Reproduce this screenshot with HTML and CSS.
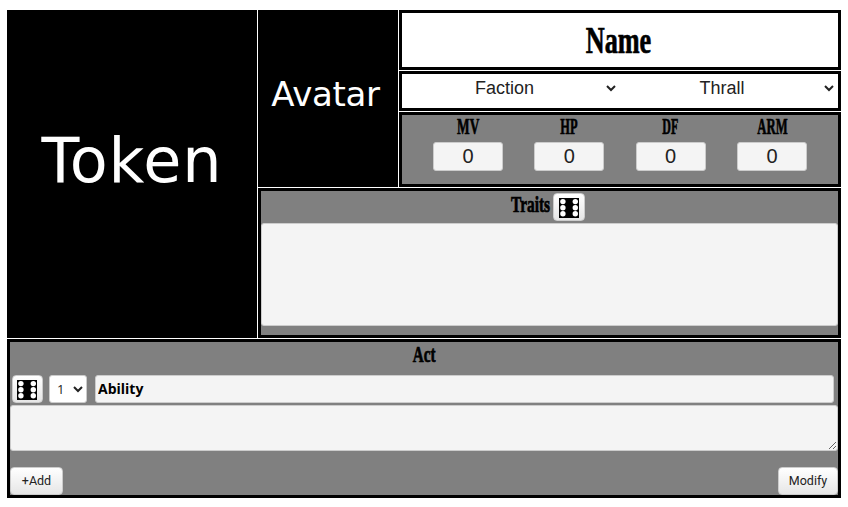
FILE: index.html
```
<!DOCTYPE html>
<html lang="en">
<head>
<meta charset="utf-8">
<title>Character sheet</title>
<link rel="stylesheet" href="styles.css">
</head>
<body>
<svg class="defs" aria-hidden="true"><symbol id="die" viewBox="0 0 20 20"><rect width="20" height="20"/><g fill="#fff"><circle cx="3.9" cy="3.6" r="2.7"/><circle cx="3.9" cy="9.7" r="2.7"/><circle cx="3.9" cy="15.8" r="2.7"/><circle cx="16.3" cy="3.6" r="2.7"/><circle cx="16.3" cy="9.7" r="2.7"/><circle cx="16.3" cy="15.8" r="2.7"/></g></symbol></svg>
<main class="sheet">
  <div class="token"><span>Token</span></div>
  <div class="avatar"><span>Avatar</span></div>
  <div class="panel name"><span class="gothic gothic-name">Name</span></div>
  <div class="panel types">
    <select><option>Faction</option></select>
    <select><option>Thrall</option></select>
  </div>
  <div class="panel stats">
    <label class="stat"><span class="gothic mv">MV</span><input class="field" value="0"></label>
    <label class="stat"><span class="gothic hp">HP</span><input class="field" value="0"></label>
    <label class="stat"><span class="gothic df">DF</span><input class="field" value="0"></label>
    <label class="stat"><span class="gothic arm">ARM</span><input class="field" value="0"></label>
  </div>
  <section class="panel traits">
    <div class="traits-head"><span class="gothic traits-title">Traits</span><button class="btn die"><svg><use href="#die"/></svg></button></div>
    <div class="field traits-box"></div>
  </section>
  <section class="panel act">
    <div class="act-head"><span class="gothic act-title">Act</span></div>
    <div class="ability">
      <button class="btn die"><svg><use href="#die"/></svg></button>
      <select class="count"><option>1</option></select>
      <input class="field ability-name" value="Ability">
    </div>
    <textarea class="field note"></textarea>
    <div class="actions"><button class="btn">+Add</button><button class="btn modify">Modify</button></div>
  </section>
</main>
</body>
</html>
```
FILE: styles.css
```
* { box-sizing: border-box; }
body { margin: 0; padding: 10px 7px 0; background: #fff; font-family: "Liberation Sans", Arial, sans-serif; overflow: hidden; }
.defs { display: none; }
.sheet {
  display: grid;
  grid-template-columns: 250px 140px 442px;
  grid-template-rows: 60px 40px 75px 150px 159px;
  gap: 1px;
}
.token, .avatar { background: #000; color: #fff; font-family: "DejaVu Sans", Verdana, sans-serif; display: flex; align-items: center; justify-content: center; }
.token { grid-row: 1 / 5; font-size: 62px; letter-spacing: .9px; padding-bottom: 28px; }
.avatar { grid-row: 1 / 4; font-size: 34px; letter-spacing: -.3px; padding: 0 5px 10px 0; }
.panel { border: 3px solid #000; background: #808080; min-width: 0; }
.gothic { display: inline-block; flex: none; font: bold 23px/24px "Liberation Serif", serif; color: #000; -webkit-text-stroke: .7px #000; }
.name { background: #fff; display: flex; justify-content: center; align-items: center; padding-right: 3px; }
.gothic-name { font-size: 38px; line-height: 40px; transform: scaleX(.69); }
select { font-family: inherit; color: #222; background: #fff; border: 0; }
.types { background: #fff; display: grid; grid-template-columns: 217px 218px; align-items: start; }
.types select { height: 28px; font-size: 18px; text-align: center; text-align-last: center; padding: 0; }
.stats { display: flex; justify-content: space-between; padding: 0 31px; }
.stat { width: 70px; display: flex; flex-direction: column; align-items: center; }
.stat .gothic { height: 27px; }
.mv { transform: scaleX(.58); }
.hp { transform: scaleX(.54); }
.df { transform: scaleX(.52); }
.arm { transform: scaleX(.55); }
.field { display: block; background: #f4f4f4; border: 1px solid #ccc; border-radius: 3px; color: #222; outline: 0; margin: 0; }
.stat .field { width: 70px; height: 29px; text-align: center; font: 20px "Liberation Sans", sans-serif; padding: 0; }
.traits { grid-column: 2 / 4; }
.traits-head { height: 32px; display: flex; justify-content: center; padding: 2px 3px 0 0; }
.traits-title { width: 39px; white-space: nowrap; transform: scaleX(.67); transform-origin: left; margin-right: 3px; }
.traits-box { height: 103px; }
.btn { height: 28px; border: 1px solid #ccc; border-radius: 4px; background: linear-gradient(#fff, #e6e6e6); font: 12.5px Roboto, sans-serif; color: #222; padding: 0 0 2px; width: 53px; }
.modify { width: 60px; }
.btn.die { width: 32px; display: flex; align-items: center; justify-content: center; padding: 2px 0 0; }
.die svg { display: block; width: 20px; height: 20px; }
.act { grid-column: 1 / 4; }
.act-head { height: 33px; display: flex; justify-content: center; padding-top: 1px; }
.act-title { transform: scaleX(.66); }
.ability { height: 30px; display: flex; padding: 0 4px 0 2px; }
.ability .die { width: 31px; padding-right: 1px; }
.count { width: 38px; height: 28px; margin: 0 8px 0 6px; border: 1px solid #ccc; border-radius: 3px; font: 13px "Open Sans", sans-serif; padding: 0 2px 0 3px; }
.ability-name { flex: 1; height: 28px; font: bold 14px "Open Sans", sans-serif; color: #000; padding: 0 2px 2px; }
.note { width: 100%; height: 46px; resize: vertical; }
.actions { display: flex; justify-content: space-between; margin-top: 16px; }
```
